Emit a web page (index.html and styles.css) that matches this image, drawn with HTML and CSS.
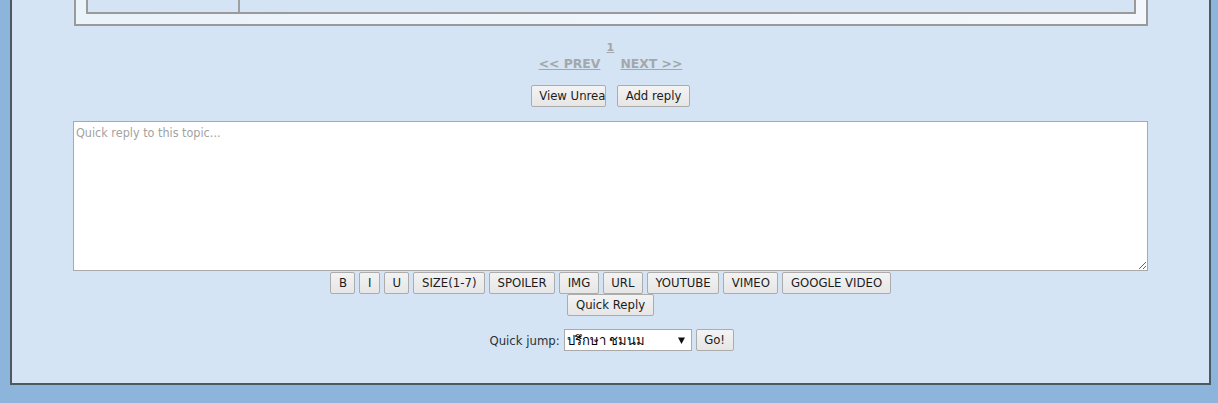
FILE: index.html
```html
<!DOCTYPE html>
<html lang="en">
<head>
<meta charset="utf-8">
<title>Topic</title>
<link rel="stylesheet" href="styles.css">
</head>
<body>
<div class="panel">
  <div class="tbl-outer">
    <div class="tbl-inner">
      <div class="cell-left"></div>
      <div class="cell-right"></div>
    </div>
  </div>

  <div class="pager">
    <a class="pg-link" href="#">&lt;&lt; PREV</a>
    <div class="pages"><a class="pg-num" href="#">1</a></div>
    <a class="pg-link" href="#">NEXT &gt;&gt;</a>
  </div>

  <div class="actions">
    <button class="btn btn-clip" type="button">View Unread</button>
    <button class="btn" type="button">Add reply</button>
  </div>

  <textarea class="reply" placeholder="Quick reply to this topic..."></textarea>

  <div class="bbcodes">
    <button class="btn" type="button">B</button>
    <button class="btn" type="button">I</button>
    <button class="btn" type="button">U</button>
    <button class="btn" type="button">SIZE(1-7)</button>
    <button class="btn" type="button">SPOILER</button>
    <button class="btn" type="button">IMG</button>
    <button class="btn" type="button">URL</button>
    <button class="btn" type="button">YOUTUBE</button>
    <button class="btn" type="button">VIMEO</button>
    <button class="btn" type="button">GOOGLE VIDEO</button>
  </div>
  <div class="submit-row">
    <button class="btn" type="button">Quick Reply</button>
  </div>

  <div class="jump">
    <label class="jump-label" for="jump">Quick jump:</label>
    <select class="jump-select" id="jump">
      <option>ปรึกษา ชมนม</option>
    </select>
    <button class="btn" type="button">Go!</button>
  </div>
</div>
</body>
</html>
```

FILE: styles.css
```css
html, body {
  margin: 0;
  padding: 0;
}

body {
  background: #8db4da;
  font-family: "DejaVu Sans Condensed", "Liberation Sans", Arial, sans-serif;
  font-size: 13px;
  height: 403px;
  overflow: hidden;
}

.panel {
  margin: 0 7px 0 10px;
  border: 2px solid #4b5a61;
  border-top: none;
  background: #d4e4f4;
  box-sizing: border-box;
  height: 385px;
}

/* bottom of the posts table */
.tbl-outer {
  margin: 0 61px 0 62px;
  border: 2px solid #9a9a9a;
  border-top: none;
  padding: 0 10px 10px;
  background: linear-gradient(90deg, #eaf2fa, #f3f7fc);
}

.tbl-inner {
  display: flex;
  height: 12px;
  border: 2px solid #9a9a9a;
  border-top: none;
  background: #d4e4f4;
}

.cell-left {
  width: 150px;
  border-right: 2px solid #a0a0a0;
}

.cell-right {
  flex: 1;
}

/* pagination */
.pager {
  display: flex;
  justify-content: center;
  align-items: flex-end;
  height: 30px;
  margin-top: 15px;
  font-family: "DejaVu Sans", Verdana, sans-serif;
  font-weight: bold;
}

.pg-link {
  color: #a3a7aa;
  font-size: 12.4px;
  line-height: 14px;
}

.pages {
  align-self: flex-start;
  width: 20px;
  text-align: center;
  line-height: 12px;
}

.pg-num {
  color: #a3a7aa;
  font-size: 11px;
}

/* buttons */
.btn {
  font-family: "DejaVu Sans Condensed", "Liberation Sans", Arial, sans-serif;
  font-size: 13px;
  color: #1b1b1b;
  height: 22px;
  padding: 0 7.5px;
  margin: 0;
  border: 1px solid #acacac;
  border-radius: 2px;
  background: linear-gradient(#f3f3f3, #e6e6e6);
  white-space: nowrap;
  line-height: 18px;
}

.actions {
  display: flex;
  justify-content: center;
  gap: 11px;
  margin-top: 14px;
}

.btn-clip {
  width: 75px;
  overflow: hidden;
  text-align: left;
  padding-left: 7px;
}

.reply {
  display: block;
  box-sizing: border-box;
  margin: 14px 0 0 61px;
  width: 1075px;
  height: 150px;
  border: 1px solid #a9a9a9;
  padding: 3px 2px;
  font-family: "DejaVu Sans Condensed", "Liberation Sans", Arial, sans-serif;
  font-size: 12.5px;
  background: #fff;
  resize: both;
}

.reply::placeholder {
  color: #a2a2a2;
}

.bbcodes {
  display: flex;
  justify-content: center;
  gap: 4px;
  margin-top: 1px;
}

.submit-row {
  display: flex;
  justify-content: center;
}

.jump {
  display: flex;
  justify-content: center;
  align-items: center;
  gap: 4px;
  margin-top: 13px;
  padding-left: 2px;
}

.jump-label {
  color: #27333d;
  font-size: 13px;
}

.jump-select {
  -webkit-appearance: none;
  appearance: none;
  width: 128px;
  height: 22px;
  box-sizing: border-box;
  border: 1px solid #a9a9a9;
  border-radius: 0;
  padding: 0 16px 0 2px;
  margin: 0;
  font-family: "DejaVu Sans Condensed", "DejaVu Sans", "Liberation Sans", sans-serif;
  font-size: 13px;
  color: #000;
  background: #fff url("data:image/svg+xml;utf8,<svg xmlns='http://www.w3.org/2000/svg' width='7' height='7'><path d='M0 0.5h7L3.5 7z' fill='%23111'/></svg>") no-repeat right 6px center;
}
```
